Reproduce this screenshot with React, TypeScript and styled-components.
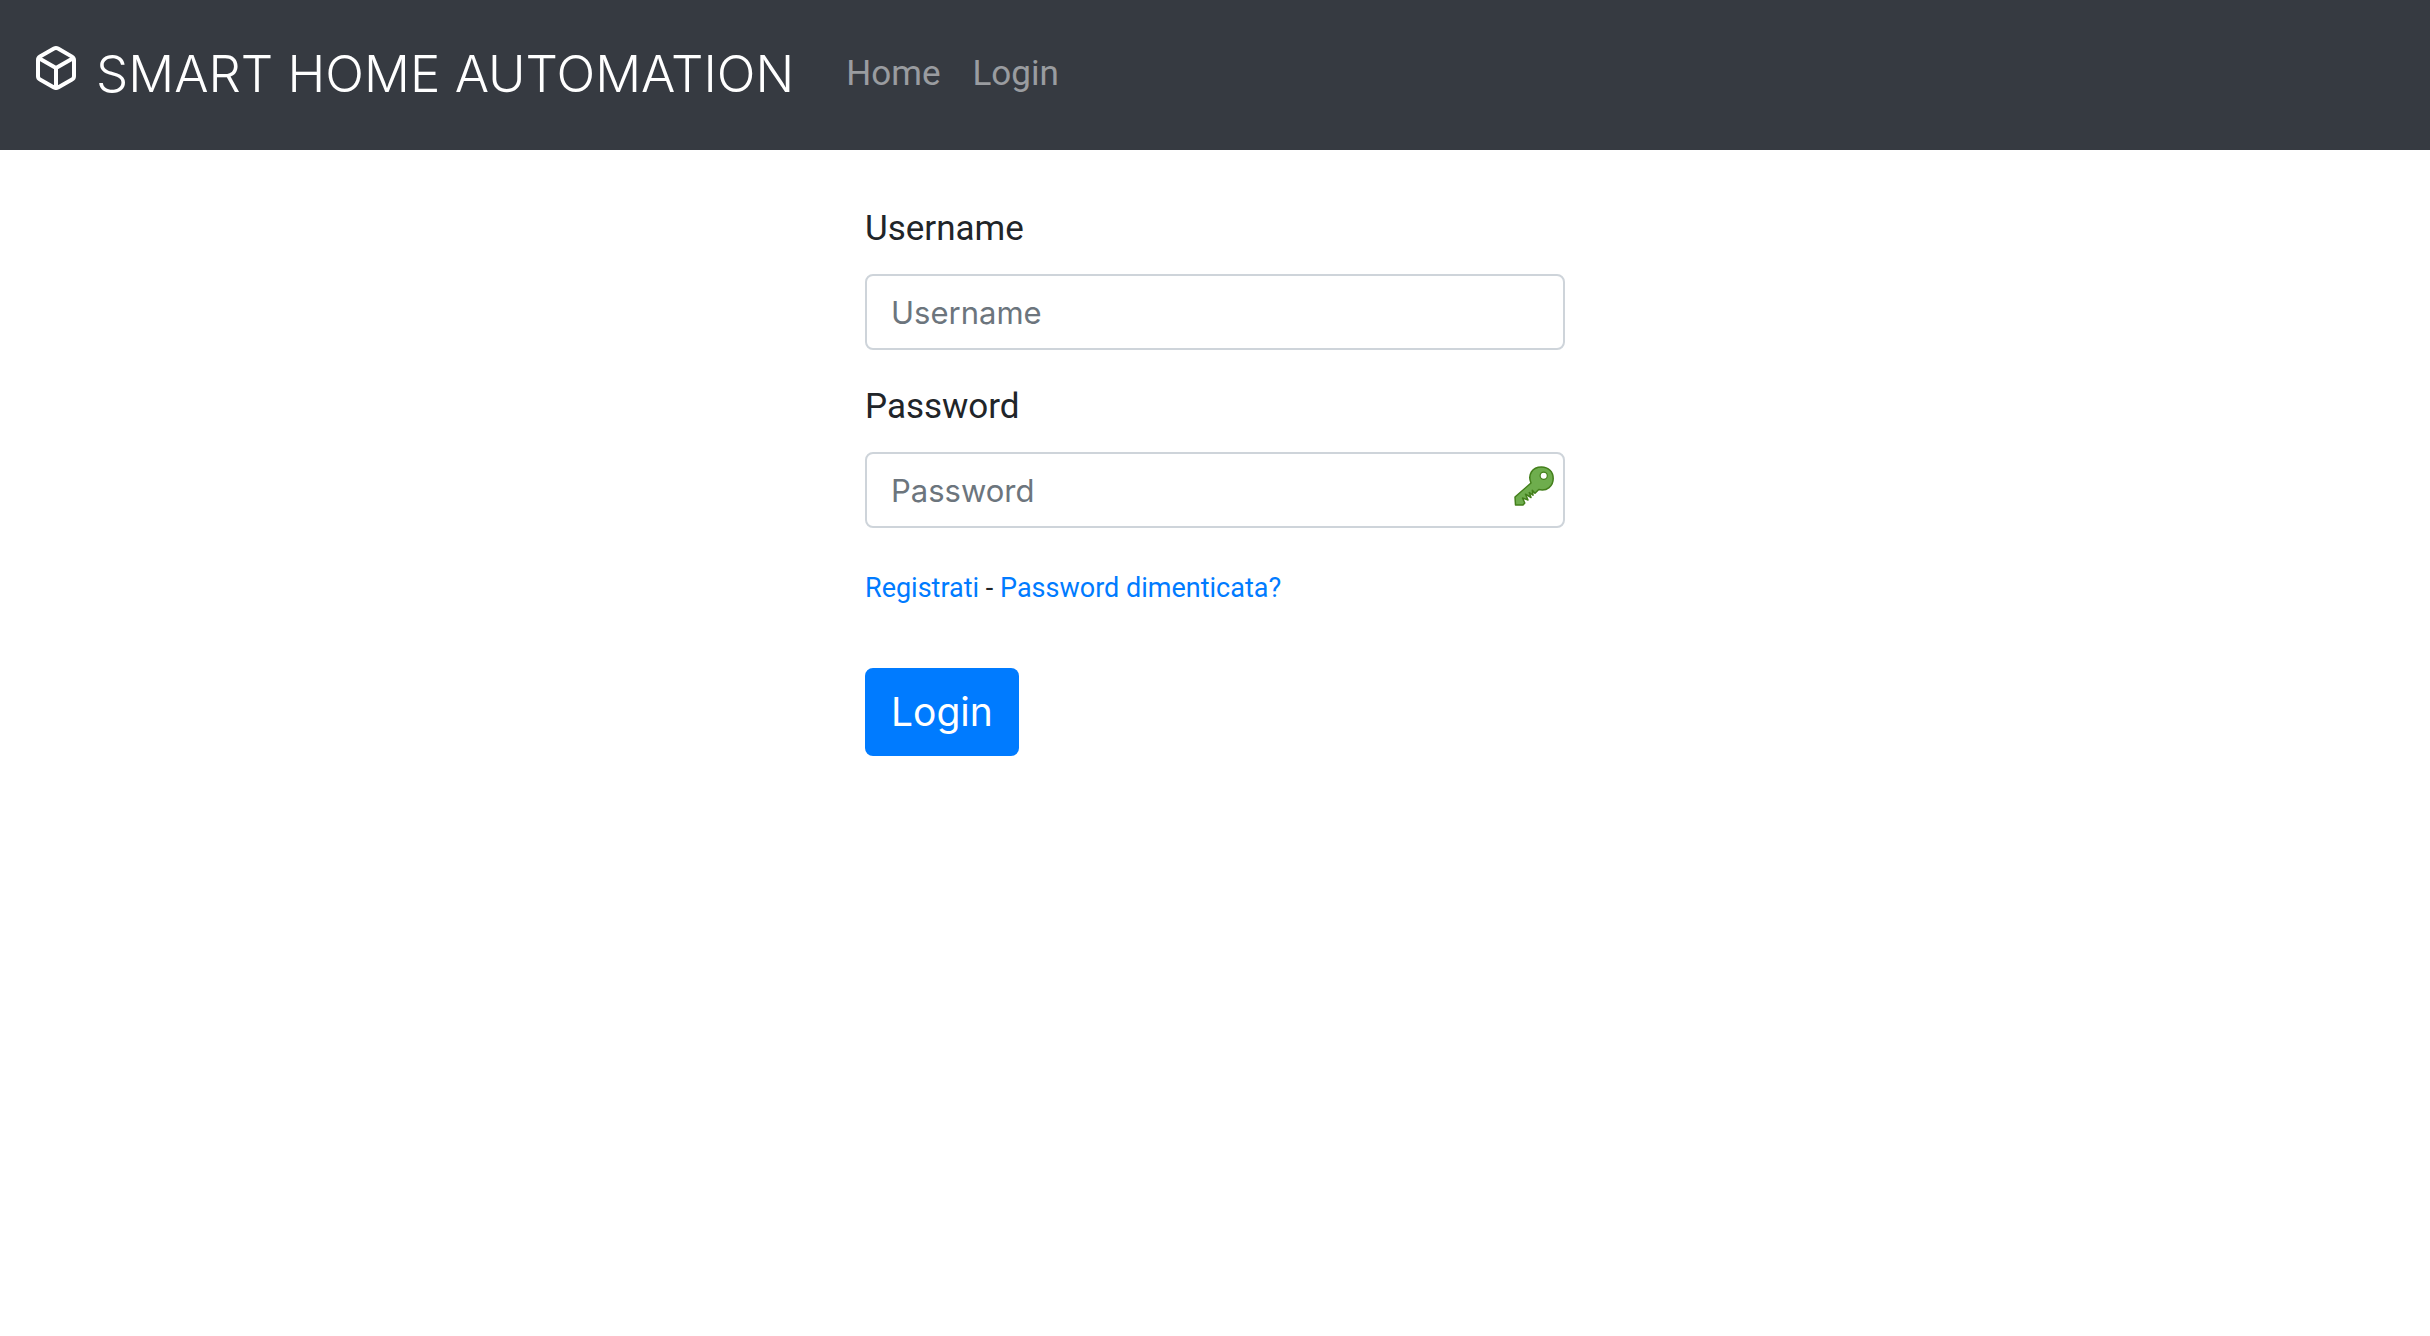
import React from "react";
import styled, { createGlobalStyle } from "styled-components";

const GlobalStyle = createGlobalStyle`
  *, *::before, *::after { box-sizing: border-box; }
  body {
    margin: 0;
    background: #fff;
    color: #212529;
    font: 400 35px/54px Roboto, "Liberation Sans", sans-serif;
  }
`;

const Navbar = styled.nav`
  display: flex;
  align-items: center;
  padding: 35px 36px 37px;
  background: #363a41;
`;

const Brand = styled.a`
  display: flex;
  align-items: flex-start;
  gap: 20px;
  margin-right: 52px;
  color: #fff;
  font: 300 51px/78px Inter, Roboto, sans-serif;
  text-decoration: none;
  text-transform: uppercase;
  white-space: nowrap;
`;

const BrandIcon = styled.svg`
  width: 40px;
  height: 44px;
  margin-top: 11px;
`;

const NavList = styled.ul`
  display: flex;
  gap: 32px;
  margin: 0;
  padding: 0;
  list-style: none;
`;

const NavLink = styled.a`
  color: rgba(255, 255, 255, 0.5);
  text-decoration: none;
`;

const Form = styled.form`
  width: 100%;
  max-width: 700px;
  margin: 0 auto;
  padding-top: 52px;
`;

const Field = styled.div`
  margin-bottom: 30px;
`;

const Label = styled.label`
  display: block;
  margin-bottom: 18px;
`;

const InputBox = styled.div`
  display: grid;
  align-items: center;
`;

const Input = styled.input`
  grid-area: 1 / 1;
  width: 100%;
  height: 76px;
  padding: 12px 24px;
  border: 2px solid #ced4da;
  border-radius: 8px;
  background: #fff;
  color: #495057;
  font: 400 31px/48px Inter, Roboto, sans-serif;

  &::placeholder {
    color: #6c757d;
    opacity: 1;
  }
`;

const KeyIcon = styled.svg`
  grid-area: 1 / 1;
  justify-self: end;
  width: 40px;
  height: 40px;
  margin: 0 11px 8px 0;
`;

const Links = styled.p`
  margin: 0 0 50px;
  font-size: 27px;
  line-height: 60px;
`;

const TextLink = styled.a`
  color: #007bff;
  text-decoration: none;
`;

const Submit = styled.button`
  height: 88px;
  padding: 0 26px;
  border: 0;
  border-radius: 8px;
  background: #007bff;
  color: #fff;
  font: 400 39px/60px Inter, Roboto, sans-serif;
`;

export default function App() {
  return (
    <>
      <GlobalStyle />
      <Navbar>
        <Brand href="#">
          <BrandIcon viewBox="0 0 40 44" fill="none" stroke="#fff" strokeWidth="4" strokeLinejoin="round" aria-hidden="true">
            <path d="M18 2.6 4 10.6Q2 11.800 2 14V30.200Q2 32.400 4 33.500L18 41.500Q20 42.500 22 41.500L36 33.500Q38 32.400 38 30.200V14Q38 11.800 36 10.600L22 2.600Q20 1.500 18 2.600Z" />
            <path d="M3 12.200 20 22 37 12.200M20 22V42" />
          </BrandIcon>
          Smart Home Automation
        </Brand>
        <NavList>
          <li><NavLink href="#">Home</NavLink></li>
          <li><NavLink href="#login">Login</NavLink></li>
        </NavList>
      </Navbar>
      <main>
        <Form onSubmit={(event) => event.preventDefault()}>
          <Field>
            <Label htmlFor="username">Username</Label>
            <InputBox>
              <Input id="username" type="text" placeholder="Username" />
            </InputBox>
          </Field>
          <Field>
            <Label htmlFor="password">Password</Label>
            <InputBox>
              <Input id="password" type="password" placeholder="Password" />
              <KeyIcon viewBox="0 0 40 40" aria-hidden="true">
                <path
                  fill="#6ead4d"
                  stroke="#437f1b"
                  strokeWidth="1.500"
                  strokeLinejoin="round"
                  fillRule="evenodd"
                  d="M17 17C13.500 9 18 1 27.500 1 34.500 1 39.200 6 39.200 12.500 39.200 20 33 25.500 24.800 23.500L21 27.300 18.300 24.200 19 29.200 15.300 26.500 17 31.500 11.500 28.200 14 34 8.500 32 10.800 37 9 39H1.500L1 31Z"
                />
                <circle cx="29.700" cy="9.800" r="3.600" fill="#fff" stroke="#437f1b" strokeWidth="1.200" />
              </KeyIcon>
            </InputBox>
          </Field>
          <Links>
            <TextLink href="#register">Registrati</TextLink> - <TextLink href="#reset">Password dimenticata?</TextLink>
          </Links>
          <Submit type="submit">Login</Submit>
        </Form>
      </main>
    </>
  );
}
